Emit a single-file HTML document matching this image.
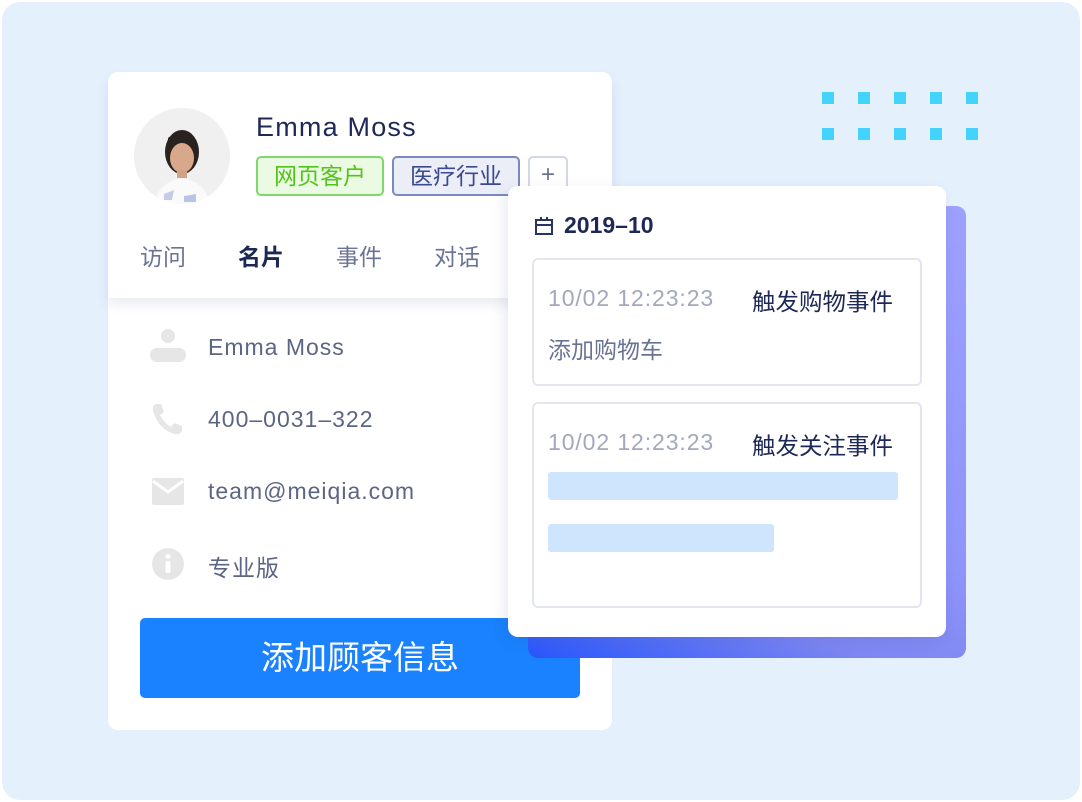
<!DOCTYPE html>
<html><head><meta charset="utf-8">
<style>
*{margin:0;padding:0;box-sizing:border-box}
body{width:1082px;height:802px;background:#fff;position:relative;overflow:hidden;font-family:"Liberation Sans","Noto Sans CJK SC",sans-serif}
.bg{position:absolute;left:2px;top:2px;width:1078px;height:798px;background:#e5f0fd;border-radius:18px}
.dot{position:absolute;width:12px;height:12px;background:#42d4fd}
.card{position:absolute;left:108px;top:72px;width:504px;height:658px;background:#fff;border-radius:10px}
.head{position:absolute;left:108px;top:72px;width:504px;height:226px;background:#fff;border-radius:10px 10px 0 0;box-shadow:0 6px 12px rgba(40,60,120,0.10)}
.avatar{position:absolute;left:26px;top:36px;width:96px;height:96px;border-radius:50%;background:#efefef;overflow:hidden}
.name{position:absolute;left:148px;top:40px;font-size:27px;letter-spacing:1.2px;color:#1d2857}
.tag{position:absolute;top:84px;height:40px;border-radius:5px;font-size:23px;line-height:36px;text-align:center}
.tabs span{position:absolute;top:166px;font-size:23px;color:#6b7394}
.row{position:absolute;left:208px;font-size:23px;letter-spacing:1px;color:#5d6585}
.btn{position:absolute;left:140px;top:618px;width:440px;height:80px;background:#1a82fe;border-radius:5px;color:#fff;font-size:33px;line-height:80px;text-align:center}
.shadowcard{position:absolute;left:528px;top:206px;width:438px;height:452px;border-radius:10px;background:linear-gradient(200deg,#9da0fd 0%,#8f94f8 60%,#7d86f2 80%,#2856fb 100%)}
.pop{position:absolute;left:508px;top:186px;width:438px;height:451px;background:#fff;border-radius:10px;box-shadow:-4px 4px 14px rgba(40,60,120,0.10)}
.ev{position:absolute;left:24px;width:390px;border:2px solid #e3e6f1;border-radius:6px}
.t{position:absolute;left:14px;font-size:23px;letter-spacing:0.9px;color:#a3a8bc}
.e{position:absolute;left:218px;font-size:23.5px;color:#1d2857}
.bar{position:absolute;left:14px;height:28px;background:#cfe4fd;border-radius:3px}
</style></head><body>
<div class="bg"></div>
<div class="dot" style="left:822px;top:92px"></div><div class="dot" style="left:858px;top:92px"></div><div class="dot" style="left:894px;top:92px"></div><div class="dot" style="left:930px;top:92px"></div><div class="dot" style="left:966px;top:92px"></div>
<div class="dot" style="left:822px;top:128px"></div><div class="dot" style="left:858px;top:128px"></div><div class="dot" style="left:894px;top:128px"></div><div class="dot" style="left:930px;top:128px"></div><div class="dot" style="left:966px;top:128px"></div>

<div class="card"></div>
<div class="row" style="top:334px">Emma Moss</div>
<div class="row" style="top:406px">400–0031–322</div>
<div class="row" style="top:478px">team@meiqia.com</div>
<div class="row" style="top:549px">专业版</div>
<svg style="position:absolute;left:148px;top:326px" width="40" height="40" viewBox="0 0 40 40"><circle cx="20" cy="10" r="7" fill="#e6e6e6"/><rect x="2" y="22" width="36" height="14" rx="7" fill="#e6e6e6"/></svg>
<svg style="position:absolute;left:150px;top:402px" width="36" height="34" viewBox="0 0 36 34"><path d="M6 2 L11 2 L14 10 L10 13 Q14 21 21 25 L24 21 L32 24 L32 29 Q30 33 25 32 Q9 28 3 9 Q2 3 6 2Z" fill="#e6e6e6"/></svg>
<svg style="position:absolute;left:152px;top:478px" width="32" height="27" viewBox="0 0 32 27"><rect x="0" y="0" width="32" height="27" rx="2" fill="#e6e6e6"/><path d="M1 3 L16 14 L31 3" stroke="#fff" stroke-width="3" fill="none"/></svg>
<svg style="position:absolute;left:152px;top:548px" width="32" height="32" viewBox="0 0 32 32"><circle cx="16" cy="16" r="16" fill="#e6e6e6"/><circle cx="16" cy="8.5" r="2.5" fill="#fff"/><rect x="13.5" y="13" width="5" height="12" rx="1.5" fill="#fff"/></svg>
<div class="btn">添加顾客信息</div>

<div class="head">
 <div class="avatar"><svg width="96" height="96" viewBox="0 0 96 96"><rect width="96" height="96" fill="#f0f0f0"/><path d="M20 96 Q24 74 48 70 Q72 74 76 96Z" fill="#fafafa"/><path d="M30 86 L40 82 L38 92 L30 92Z" fill="#c5cce8"/><path d="M50 88 L62 86 L62 94 L50 94Z" fill="#b8c4e6"/><ellipse cx="48" cy="44" rx="17" ry="22" fill="#2a221e"/><ellipse cx="48" cy="50" rx="12" ry="15" fill="#d9a88a"/><path d="M34 36 Q48 24 62 38 L62 32 Q48 18 34 30Z" fill="#2a221e"/><rect x="43" y="62" width="10" height="8" fill="#d3a186"/></svg></div>
 <div class="name">Emma Moss</div>
 <div class="tag" style="left:148px;width:128px;border:2px solid #7fd96a;background:#ebfae3;color:#52c41a">网页客户</div>
 <div class="tag" style="left:284px;width:128px;border:2px solid #7b89c0;background:#eceef7;color:#3a4a8e">医疗行业</div>
 <div class="tag" style="left:420px;width:40px;border:2px solid #d3d7e6;background:#fff;color:#6b7394;font-size:24px;line-height:34px">+</div>
 <div class="tabs"><span style="left:32px">访问</span><span style="left:130px;color:#1d2857;font-weight:bold">名片</span><span style="left:228px">事件</span><span style="left:326px">对话</span></div>
</div>

<div class="shadowcard"></div>
<div class="pop">
 <svg style="position:absolute;left:26px;top:30px" width="20" height="20" viewBox="0 0 20 20"><rect x="2" y="4" width="16" height="14" fill="none" stroke="#2a3461" stroke-width="2"/><line x1="2" y1="9" x2="18" y2="9" stroke="#2a3461" stroke-width="2"/><line x1="7" y1="1" x2="7" y2="5" stroke="#2a3461" stroke-width="2"/><line x1="13" y1="1" x2="13" y2="5" stroke="#2a3461" stroke-width="2"/></svg>
 <div style="position:absolute;left:56px;top:26px;font-size:23px;color:#1d2857;font-weight:bold">2019–10</div>
 <div class="ev" style="top:72px;height:128px">
  <div class="t" style="top:25px">10/02 12:23:23</div><div class="e" style="top:23px">触发购物事件</div>
  <div class="t" style="top:71px;color:#6b7394;letter-spacing:0">添加购物车</div>
 </div>
 <div class="ev" style="top:216px;height:206px">
  <div class="t" style="top:25px">10/02 12:23:23</div><div class="e" style="top:23px">触发关注事件</div>
  <div class="bar" style="top:68px;width:350px"></div>
  <div class="bar" style="top:120px;width:226px"></div>
 </div>
</div>
</body></html>
